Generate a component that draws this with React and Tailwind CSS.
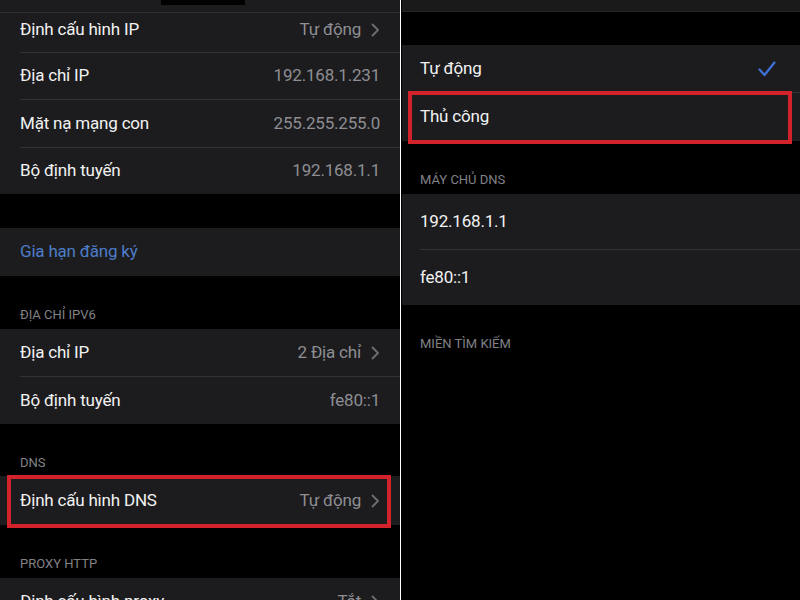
import React from "react";

const font = { fontFamily: "Roboto, 'Noto Sans', 'Liberation Sans', sans-serif" };

function Chevron() {
  return (
    <svg width="9" height="14" viewBox="0 0 9 14" className="ml-[10px] shrink-0">
      <polyline points="1.5,1.5 7,7 1.5,12.5" fill="none" stroke="#6e6e73" strokeWidth="1.8" strokeLinecap="round" strokeLinejoin="round" />
    </svg>
  );
}

// one settings cell; separator runs from the text inset to the edge
function Row({ label, value, chevron, h = "h-[47px]", last, extra = "", pl = "pl-[20px]", children }) {
  return (
    <div className={`${pl} bg-[#1c1c1e] relative`}>
      <div className={`flex items-center justify-between pr-[20px] ${h} ${extra} ${last ? "" : "border-b border-[#323235]"}`}>
        <span className="text-[17px] text-[#f2f2f2] tracking-[-0.2px]">{label}</span>
        <span className="flex items-center text-[17px] text-[#8e8e93] tracking-[-0.2px]">
          {value}
          {chevron && <Chevron />}
        </span>
      </div>
      {children}
    </div>
  );
}

function Header({ text, h, pb = "pb-[6px]", pl = "pl-[20px]" }) {
  return (
    <div className={`flex items-end ${h} ${pb} ${pl}`}>
      <span className="text-[13px] leading-[16px] text-[#818186] uppercase">{text}</span>
    </div>
  );
}

function RedBox({ cls }) {
  return <div className={`absolute border-[4px] border-[#d2222b] pointer-events-none ${cls}`} />;
}

function LeftPanel() {
  return (
    <div className="w-[400px] shrink-0 overflow-hidden">
      <div className="h-[13px] bg-[#1c1c1e] border-b border-[#2e2e31] relative">
        <div className="absolute left-[161px] top-0 w-[84px] h-[5px] bg-black" />
      </div>
      <Row label="Định cấu hình IP" value="Tự động" chevron h="h-[40px]" extra="pb-[6px]" />
      <Row label="Địa chỉ IP" value="192.168.1.231" />
      <Row label="Mặt nạ mạng con" value="255.255.255.0" h="h-[48px]" />
      <Row label="Bộ định tuyến" value="192.168.1.1" h="h-[46px]" last />

      <div className="h-[34px]" />
      <div className="h-[48px] bg-[#1c1c1e] flex items-center pl-[20px]">
        <span className="text-[17px] text-[#4d7cc9] tracking-[-0.2px]">Gia hạn đăng ký</span>
      </div>

      <Header text="Địa chỉ IPv6" h="h-[53px]" />
      <Row label="Địa chỉ IP" value="2 Địa chỉ" chevron h="h-[48px]" />
      <Row label="Bộ định tuyến" value="fe80::1" last />

      <Header text="DNS" h="h-[52px]" pb="pb-[5px]" />
      <Row label="Định cấu hình DNS" value="Tự động" chevron h="h-[49px]" last>
        <RedBox cls="left-[7px] right-[9px] top-[-1px] bottom-[-3px]" />
      </Row>

      <Header text="Proxy HTTP" h="h-[53px]" />
      <Row label="Định cấu hình proxy" value="Tắt" chevron last />
    </div>
  );
}

function RightPanel() {
  return (
    <div className="flex-1 overflow-hidden">
      <div className="h-[12px] bg-[#1a1a1b] border-b border-[#262628]" />
      <div className="h-[33px]" />
      <Row label="Tự động" pl="pl-[18px]" h="h-[48px]" value={
        <svg width="18" height="16" viewBox="0 0 18 16" className="mr-[4px]">
          <polyline points="1.5,8.5 6.5,14 16.5,1.5" fill="none" stroke="#3f72d8" strokeWidth="2.2" strokeLinecap="round" strokeLinejoin="round" />
        </svg>
      } />
      <Row label="Thủ công" pl="pl-[18px]" h="h-[48px]" last>
        <RedBox cls="left-[6px] right-[8px] top-[-2px] bottom-[-3px]" />
      </Row>

      <Header text="Máy chủ DNS" h="h-[53px]" pl="pl-[18px]" />
      <Row label="192.168.1.1" pl="pl-[18px]" h="h-[56px]" />
      <Row label="fe80::1" pl="pl-[18px]" h="h-[55px]" last />

      <Header text="Miền tìm kiếm" h="h-[55px]" pb="pb-[8px]" pl="pl-[18px]" />
    </div>
  );
}

export default function App() {
  return (
    <div className="w-[800px] h-[600px] bg-black flex overflow-hidden" style={font}>
      <LeftPanel />
      <div className="w-[1px] bg-white shrink-0" />
      <div className="w-[1px] bg-black shrink-0" />
      <RightPanel />
    </div>
  );
}
